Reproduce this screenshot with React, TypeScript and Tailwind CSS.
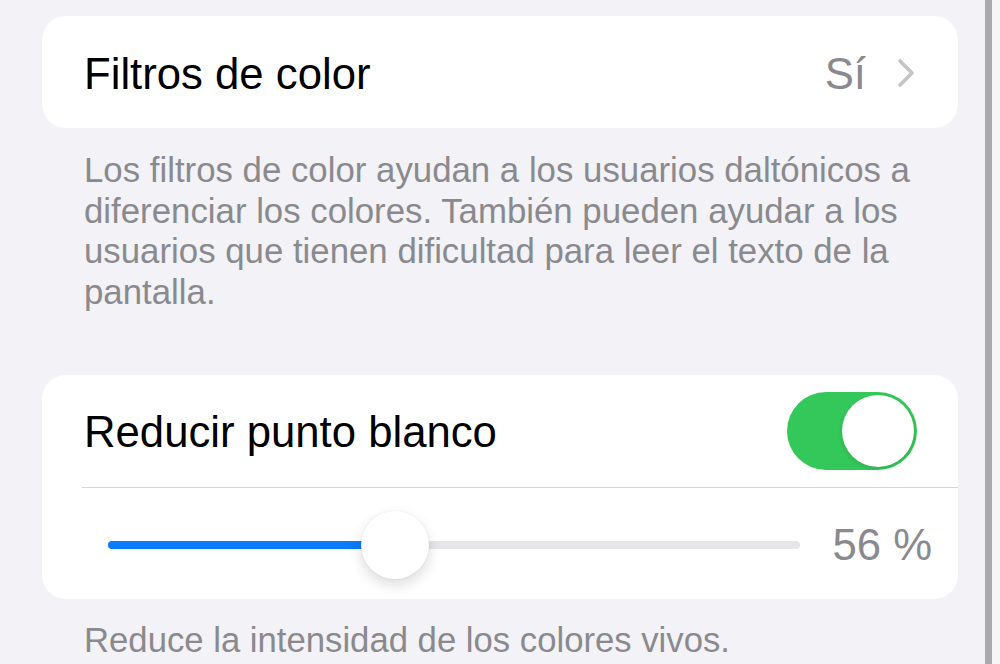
import React from "react";

const font = { fontFamily: '"Liberation Sans", Arial, sans-serif' };

function Chevron() {
  return (
    <svg width="18" height="30" viewBox="0 0 18 30" fill="none">
      <path d="M3 3 L15 15 L3 27" stroke="#c4c4c7" strokeWidth="3.6" strokeLinecap="round" strokeLinejoin="round" />
    </svg>
  );
}

function Toggle() {
  return (
    <div className="relative h-[78px] w-[130px] rounded-full bg-[#34c759]">
      <div className="absolute right-[3px] top-[3px] h-[72px] w-[72px] rounded-full bg-white shadow-[0_2px_4px_rgba(0,0,0,0.12)]" />
    </div>
  );
}

function Slider({ pct }: { pct: number }) {
  return (
    <div className="relative h-[70px] w-[692px]">
      <div className="absolute left-0 right-0 top-[31px] h-[8px] rounded-full bg-[#e5e5ea]" />
      <div className="absolute left-0 top-[31px] h-[8px] rounded-l-full bg-[#0a7aff]" style={{ width: `${pct}%` }} />
      <div
        className="absolute top-[1px] h-[68px] w-[68px] -translate-x-1/2 rounded-full bg-white shadow-[0_6px_14px_rgba(0,0,0,0.14),0_0_2px_rgba(0,0,0,0.08)]"
        style={{ left: `${pct}%` }}
      />
    </div>
  );
}

export default function App() {
  return (
    <div className="flex h-[664px] w-[1000px] overflow-hidden bg-[#f2f2f7]" style={font}>
      <div className="flex-1 pl-[42px] pr-[27px] pt-[16px]">
        <div className="flex h-[112px] items-center justify-between rounded-[24px] bg-white pl-[42px] pr-[43px] pt-[3px]">
          <span className="text-[43.7px] leading-none text-black">Filtros de color</span>
          <div className="flex items-center gap-[31px]">
            <span className="text-[43.7px] leading-none text-[#8a8a8e]">Sí</span>
            <Chevron />
          </div>
        </div>

        <p className="pl-[42px] pt-[22px] text-[34.8px] leading-[40.7px] text-[#8a8a8e]">
          Los filtros de color ayudan a los usuarios daltónicos a<br />
          diferenciar los colores. También pueden ayudar a los<br />
          usuarios que tienen dificultad para leer el texto de la<br />
          pantalla.
        </p>

        <div className="mt-[62px] rounded-[24px] bg-white">
          <div className="flex h-[112px] items-center justify-between pl-[42px] pr-[41px]">
            <span className="pt-[2px] text-[43.7px] leading-none text-black">Reducir punto blanco</span>
            <Toggle />
          </div>
          <div className="ml-[40px] h-px bg-[#d6d6da]" />
          <div className="flex h-[111px] items-center pl-[66px] pr-[26px] pt-[3px]">
            <Slider pct={41.5} />
            <span className="ml-auto text-[43.7px] leading-none text-[#8a8a8e]">56 %</span>
          </div>
        </div>

        <p className="mt-[21px] pl-[42px] text-[34.7px] leading-[40.7px] text-[#8a8a8e]">
          Reduce la intensidad de los colores vivos.
        </p>
      </div>
      <div className="w-[7px] bg-[#a9a9ae]" />
      <div className="w-[8px] bg-[#f6f6f9]" />
    </div>
  );
}
